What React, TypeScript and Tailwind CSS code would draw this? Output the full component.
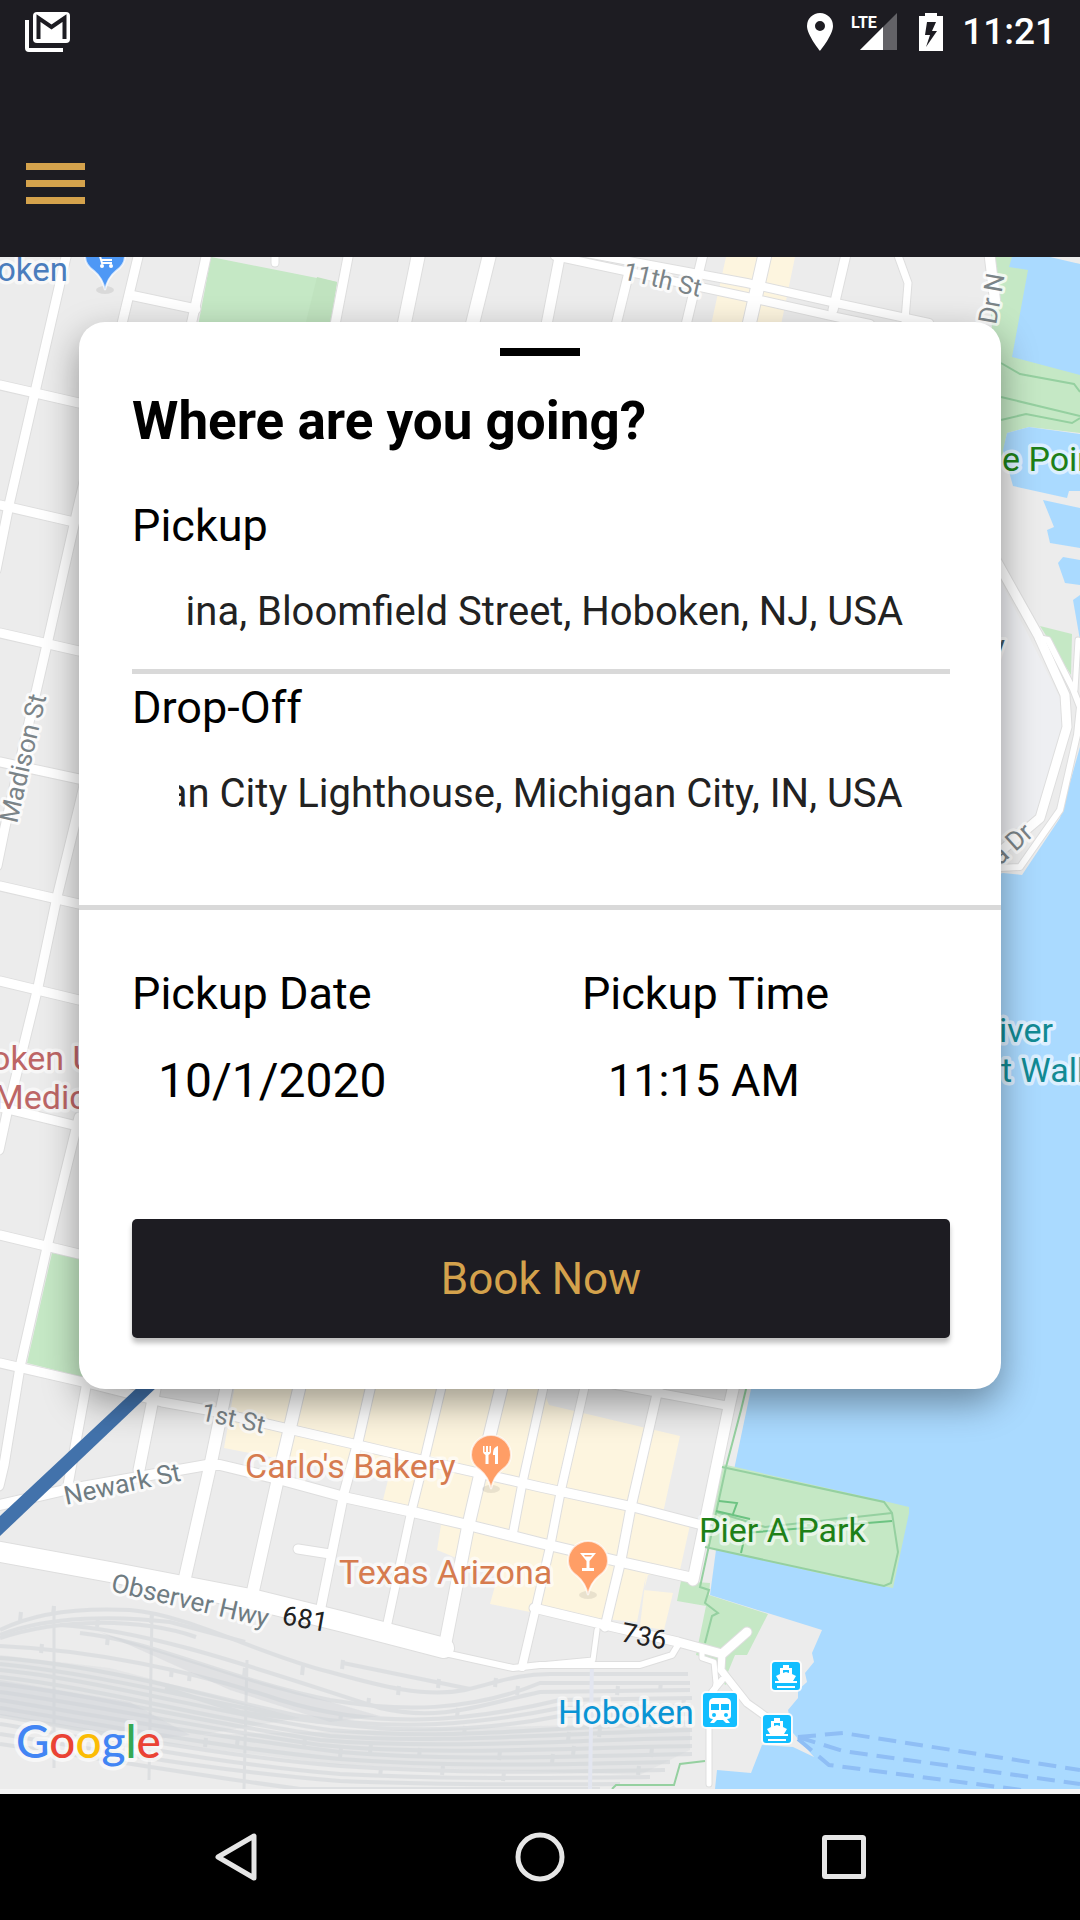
import { useEffect, useRef } from "react";

type Line = { d: string; w: number };

const roads: Line[] = [
  // north-south streets, west side
  { d: "M66 257L35 392L9 505L-4 570", w: 9 },
  { d: "M138 257L79 503L48 640L36 692L5 827L-3 866", w: 9 },
  { d: "M206 257L190 330L79 807L57 897L38 987L7 1113L-1 1150", w: 9 },
  { d: "M79 1117L48 1243L20 1367L4 1465L-1 1486", w: 9 },
  { d: "M86 1387L68 1485", w: 9 },
  { d: "M155 1389L139 1470", w: 11 },
  { d: "M227 1385L210 1467L184 1582", w: 12 },
  { d: "M300 1385L277 1483L251 1600", w: 12 },
  { d: "M371 1385L358 1442L344 1493L320 1612", w: 9 },
  { d: "M442 1385L425 1457L411 1513L386 1630", w: 8 },
  { d: "M502 1385L482 1467L468 1527L445 1645", w: 12 },
  { d: "M544 1385L523 1480L513 1533", w: 8 },
  { d: "M585 1385L561 1490L550 1547L537 1603L522 1667", w: 8 },
  { d: "M659 1385L631 1507L621 1560L605 1627", w: 9 },
  { d: "M734 1385L729 1407L693 1580", w: 11 },
  // cross streets, west side
  { d: "M130 295L196 309", w: 9 },
  { d: "M0 385L79 403", w: 9 },
  { d: "M0 505L74 522", w: 9 },
  { d: "M0 633L79 651", w: 9 },
  { d: "M0 762L79 779", w: 9 },
  { d: "M0 886L79 904", w: 9 },
  { d: "M0 981L79 1000", w: 9 },
  { d: "M0 1107L73 1125", w: 9 },
  { d: "M0 1235L79 1254", w: 9 },
  { d: "M0 1363L83 1382L162 1402L207 1410L293 1430L358 1445L430 1462L540 1487L633 1507L702 1525", w: 9 },
  { d: "M600 1382L729 1406", w: 8 },
  { d: "M0 1505L65 1490L207 1465L220 1465L282 1480L348 1498L413 1512L468 1525L540 1543L621 1562L693 1578", w: 10 },
  { d: "M-10 1550L110 1572L255 1600L344 1622L444 1648", w: 20 },
  { d: "M445 1653L513 1668L540 1665L640 1665L672 1655L678 1645", w: 6 },
  { d: "M534 1608L605 1625L678 1642L722 1654L747 1632", w: 9 },
  { d: "M597 1630L593 1660L540 1665", w: 5 },
  { d: "M298 1549L330 1554", w: 9 },
  // northern edge
  { d: "M348 257L334 330", w: 9 },
  { d: "M418 257L403 330", w: 13 },
  { d: "M489 257L471 330", w: 13 },
  { d: "M275 250L275 263", w: 7 },
  { d: "M561 250L547 322", w: 10 },
  { d: "M629 272L616 325", w: 9 },
  { d: "M704 250L686 325", w: 9 },
  { d: "M766 250L749 325", w: 13 },
  { d: "M847 250L833 310", w: 9 },
  { d: "M896 250L908 283L905 320", w: 7 },
  { d: "M989 250L995 300", w: 10 },
  { d: "M570 250L747 283L836 303L929 323", w: 8 },
  { d: "M555 256L747 297L836 317L870 324", w: 8 },
  // waterfront drive
  { d: "M995 558L1038 635L1065 695L1067 727L1040 818L995 856", w: 9 },
  { d: "M1038 638L1048 640L1073 689L1080 707L1077 735L1060 810L1020 867L1000 868", w: 6 },
  { d: "M1078 640L1075 690", w: 5 },
  { d: "M722 1653L721 1670L747 1703L768 1718", w: 7 },
  { d: "M702 1653L702 1658L714 1662L716 1683L709 1727L709 1784", w: 5 },
  { d: "M722 1680L712 1692", w: 6 },
];

const water = [
  "1012,257 1050,257 1080,264 1080,375 1012,357 1028,270 1009,267",
  "1007,433 1029,427 1080,434 1080,491 1069,491 1067,498 1013,486 1003,450",
  "1043,500 1080,508 1080,548 1050,543 1047,530 1054,527",
  "1063,557 1080,560 1080,585 1065,583 1058,563",
  "1073,600 1080,595 1080,640",
  "1080,747 1060,818 1022,875 1003,873 900,900 751,1389 735,1465 716,1550 710,1595 822,1630 812,1653 814,1662 805,1673 807,1682 798,1690 798,1698 788,1710 793,1733 814,1757 793,1747 762,1745 751,1773 717,1770 715,1789 1080,1789",
];

const parks = [
  "994,257 1012,257 1080,264 1080,433 1029,427 1007,433 1001,463 990,300",
  "211,257 337,282 330,326 198,326",
  "52,1253 85,1260 95,1380 27,1363",
  "1040,626 1072,634 1071,675",
  "681,1581 710,1583 709,1595 768,1614 747,1655 735,1655 728,1672 734,1680 725,1685 714,1660 696,1655 706,1606 677,1601",
];

const pierPaths = [
  "M1001 363L1020 374L1074 384L1080 392",
  "M1001 397L1080 416",
  "M1001 420L1026 414L1072 423L1080 418",
  "M722 1467L884 1502L892 1513L898 1552L891 1583L884 1586L705 1547",
  "M892 1513L765 1527L716 1512",
  "M747 1385L741 1410L726 1467L700 1587L709 1590L705 1603L718 1613L712 1616L705 1643",
  "M705 1761L680 1764L674 1785L616 1785L612 1789",
];

const railLines = [
  "M0 1630C40 1610 90 1608 130 1610C190 1615 260 1655 330 1672C380 1686 425 1698 465 1690C505 1680 520 1674 550 1674L688 1674",
  "M0 1635C50 1615 120 1616 170 1622L245 1642",
  "M0 1638C60 1618 140 1618 196 1637",
  "M80 1633C150 1640 230 1680 330 1700C400 1712 470 1712 540 1683L690 1683",
  "M60 1625C150 1630 260 1670 380 1708C440 1722 480 1705 540 1692L690 1690",
  "M343 1663L470 1689",
  "M0 1646C90 1650 190 1670 280 1700C370 1728 460 1724 560 1700L692 1698",
  "M0 1658C110 1666 220 1700 300 1716C400 1732 480 1724 560 1708L692 1706",
  "M0 1664C110 1675 220 1706 320 1722C420 1736 500 1728 560 1716L692 1714",
  "M0 1670C100 1680 220 1714 330 1730C440 1740 520 1730 692 1722",
  "M0 1677C100 1688 220 1722 330 1736C440 1744 540 1734 692 1730",
  "M0 1684C100 1696 200 1722 320 1740C440 1750 560 1740 692 1738",
  "M0 1692C100 1706 200 1728 320 1745C440 1756 560 1748 692 1746",
  "M0 1700C100 1716 220 1738 340 1752C460 1762 560 1756 692 1754",
  "M0 1708C100 1724 220 1748 340 1759C460 1768 560 1764 670 1762",
  "M0 1716C100 1732 220 1756 340 1766C460 1774 560 1772 665 1770",
  "M0 1724C100 1740 220 1764 340 1774C460 1780 560 1778 650 1777",
  "M0 1734C100 1750 220 1772 340 1781C460 1786 560 1784 620 1784",
  "M0 1744C100 1758 200 1776 300 1789L600 1789",
  "M165 1688L240 1712L320 1722",
];

const ticks = [
  [21, 1616], [54, 1610], [98, 1622], [108, 1640], [152, 1618], [42, 1648], [172, 1672], [190, 1676],
  [245, 1672], [303, 1670], [343, 1664], [399, 1690], [439, 1683], [341, 1718], [369, 1702], [458, 1712],
  [496, 1682], [518, 1690], [206, 1742], [238, 1740], [305, 1742], [341, 1752], [371, 1748], [420, 1752],
  [465, 1730], [500, 1755], [569, 1736], [574, 1750], [606, 1707], [618, 1690], [652, 1752], [661, 1686],
  [684, 1702], [639, 1770], [504, 1776], [443, 1770], [381, 1772], [553, 1758], [600, 1732], [640, 1722],
];

function Pin({ x, y, fill, children }: { x: number; y: number; fill: string; children?: React.ReactNode }) {
  return (
    <g transform={`translate(${x} ${y})`}>
      <ellipse cx="0" cy="1" rx="9" ry="4" fill="#000" opacity="0.08" />
      <path
        d="M0 1C-2 -8 -5 -13 -11 -18C-17 -22 -20 -27 -20 -33A20 20 0 0 1 20 -33C20 -27 17 -22 11 -18C5 -13 2 -8 0 1Z"
        fill={fill}
        stroke="#fff"
        strokeWidth="2"
        strokeOpacity="0.7"
      />
      {children}
    </g>
  );
}

function Ferry({ x, y }: { x: number; y: number }) {
  return (
    <g transform={`translate(${x} ${y})`}>
      <rect x="-1" y="-1" width="32" height="32" rx="5" fill="#fff" opacity="0.85" />
      <rect x="1" y="1" width="28" height="28" rx="3" fill="#12beff" />
      <path d="M12 4h6v3h3v6l4 2-3 5H8l-3-5 4-2V7h3zM12 9v3l3-1 3 1V9z" fill="#fff" fillRule="evenodd" />
      <path d="M4 20h22v2H4zM6 25h18v2H6z" fill="#fff" />
    </g>
  );
}

function CityMap() {
  return (
    <svg
      className="absolute inset-0 h-full w-full"
      viewBox="0 257 1080 1532"
      preserveAspectRatio="xMidYMin slice"
      fontFamily="Roboto, sans-serif"
      role="img"
      aria-label="Map of Hoboken"
    >
      <rect x="0" y="257" width="1080" height="1540" fill="#ececec" />
      <polygon points="995,570 1060,698 1063,727 1037,816 995,840" fill="#eeeff2" />
      <g fill="#c5e8c5">
        {parks.map((p) => (
          <polygon key={p} points={p} />
        ))}
      </g>
      <polygon points="317,277 337,282 330,326 305,326" fill="#c0e3bf" />
      <g fill="#fdf5df">
        <polygon points="726,257 795,257 781,325 711,325" />
        <polygon points="235,1385 541,1385 549,1405 680,1436 663,1513 690,1525 680,1570 648,1575 644,1590 673,1593 664,1630 640,1626 646,1575 637,1622 530,1612 490,1604 498,1575 437,1550 441,1525 383,1500 388,1480 224,1448" />
      </g>
      <g fill="#aadaff">
        {water.map((p) => (
          <polygon key={p} points={p} />
        ))}
      </g>
      <polygon points="722,1464 884,1501 909,1507 909,1513 893,1588 840,1578 705,1547" fill="#c5e8c5" />

      <path d="M0 1655L110 1668L300 1718L200 1735L690 1722L690 1750L640 1775L340 1765L100 1735L0 1715Z" fill="#d8dbde" opacity="0.35" />
      <path d="M0 1680L130 1702L190 1735L150 1740L0 1715Z" fill="#d8dbde" opacity="0.7" />
      <path d="M100 1632L240 1676L380 1716L330 1722L230 1690Z" fill="#d8dbde" opacity="0.6" />
      <g fill="none" stroke="#d0d4d8" strokeWidth="4" opacity="0.5">
        {railLines.map((d) => (
          <path key={d} d={d} />
        ))}
        {ticks.map(([x, y]) => (
          <path key={`${x}-${y}`} d={`M${x} ${y - 4}l-1 9`} />
        ))}
        <path d="M54 1606V1768M152 1612L149 1780M247 1660L244 1789" strokeWidth="3" />
      </g>
      <path d="M592 1660L590 1789" stroke="#e3e6f0" strokeWidth="4" />

      <g fill="none" stroke="#dedede" strokeLinejoin="round" strokeLinecap="round">
        {roads.map((r) => (
          <path key={r.d} d={r.d} strokeWidth={r.w + 2} />
        ))}
      </g>
      <g fill="none" stroke="#fff" strokeLinejoin="round" strokeLinecap="round">
        {roads.map((r) => (
          <path key={r.d} d={r.d} strokeWidth={r.w} />
        ))}
      </g>
      <polygon points="140,1385 159,1385 0,1536 0,1516" fill="#4272ab" />

      <g fill="none" stroke="#95d0a0" strokeWidth="2">
        {pierPaths.map((d) => (
          <path key={d} d={d} />
        ))}
        <path d="M892 1521L745 1533M719 1501L737 1503L733 1514M716 1511L750 1519M744 1540L741 1553" stroke="#6cc382" strokeWidth="2" />
      </g>
      <g fill="none" stroke="#8fbef5" strokeWidth="4" strokeDasharray="18 9">
        <path d="M798 1737L843 1733L1080 1770" />
        <path d="M798 1737L843 1751L1080 1784" />
        <path d="M798 1739L829 1765L1022 1790" />
      </g>

      {/* street names */}
      <g fontSize="26" fill="#7b8488" stroke="#fff" strokeOpacity="0.75" strokeWidth="6" strokeLinejoin="round" paintOrder="stroke">
        <text transform="translate(622 279) rotate(13)" fontSize="25">11th St</text>
        <text transform="translate(200 1420) rotate(12)" fontSize="25">1st St</text>
        <text transform="translate(66 1505) rotate(-12)" fill="#6f7c82">Newark St</text>
        <text transform="translate(110 1591) rotate(13)" fill="#6f7c82">Observer Hwy</text>
        <text transform="translate(17 824) rotate(-77)">Madison St</text>
        <text transform="translate(996 325) rotate(-80)">Dr N</text>
        <text transform="translate(1000 866) rotate(-42)">a Dr</text>
        <text x="1005" y="656" textAnchor="end" fill="#455a64" fontSize="30">y</text>
      </g>
      <g fontSize="27" fill="#222">
        <text transform="translate(281 1624) rotate(10)">681</text>
        <text transform="translate(620 1641) rotate(11)">736</text>
      </g>

      {/* places */}
      <g fontSize="34" stroke="#fff" strokeOpacity="0.6" strokeWidth="7" strokeLinejoin="round" paintOrder="stroke">
        <text x="68" y="281" textAnchor="end" fill="#4a7dbd" fontSize="33">oken</text>
        <text x="245" y="1478" fill="#d67b4f">Carlo's Bakery</text>
        <text x="339" y="1584" fill="#d67b4f">Texas Arizona</text>
        <text x="699" y="1542" fill="#1e8018">Pier A Park</text>
        <text x="558" y="1724" fill="#0a94d4">Hoboken</text>
        <text x="1002" y="471" fill="#1e8018">e Point</text>
        <text x="1053" y="1042" textAnchor="end" fill="#128a94">River</text>
        <text x="1001" y="1082" fill="#128a94">t Walk</text>
        <text x="-9" y="1070" fill="#bd6666">oken U</text>
        <text x="-6" y="1109" fill="#bd6666">Medical</text>
      </g>

      <Pin x={105} y={289} fill="#4e98f5">
        <path d="M-9 -36h3l3 10H7M-5 -33H8M-4 -29H7" stroke="#fff" strokeWidth="2" fill="none" />
        <circle cx="-3" cy="-23" r="2" fill="#fff" />
        <circle cx="6" cy="-23" r="2" fill="#fff" />
      </Pin>
      <Pin x={491} y={1488} fill="#ff9e66">
        <path d="M-8 -42v6a4 4 0 0 0 2.500 3v9h3v-9A4 4 0 0 0 0 -36v-6h-1.500v6h-1.500v-6h-2v6h-1.500v-6zM7 -42c-4 1-5 4-5 9h2v9h3z" fill="#fff" />
      </Pin>
      <Pin x={588} y={1594} fill="#ff9e66">
        <path d="M-8 -41H8L1.500 -33V-26H6V-23H-6V-26H-1.500V-33ZM-4 -39L-3 -37.500H3L4 -39Z" fill="#fff" fillRule="evenodd" />
      </Pin>

      <g transform="translate(703 1693)">
        <rect x="-2" y="-2" width="38" height="38" rx="5" fill="#fff" opacity="0.85" />
        <rect width="34" height="34" rx="3" fill="#12beff" />
        <path d="M10 5h14q4 1 4 5v13q0 3-4 3l3 4h-4l-3-3h-6l-3 3H7l3-4q-4 0-4-3V10q0-4 4-5z" fill="#fff" />
        <path d="M8 11h8v6H8zM18 11h8v6h-8z" fill="#12beff" />
        <circle cx="11" cy="22" r="2" fill="#12beff" />
        <circle cx="23" cy="22" r="2" fill="#12beff" />
      </g>
      <Ferry x={771} y={1661} />
      <Ferry x={762} y={1714} />

      <text
        x="16"
        y="1758"
        fontFamily="Lato, sans-serif"
        fontSize="46"
        fontWeight="500"
        stroke="#fff"
        strokeOpacity="0.6"
        strokeWidth="8"
        strokeLinejoin="round"
        paintOrder="stroke"
      >
        <tspan fill="#4285f4">G</tspan>
        <tspan fill="#ea4335">o</tspan>
        <tspan fill="#fbbc05">o</tspan>
        <tspan fill="#4285f4">g</tspan>
        <tspan fill="#34a853">l</tspan>
        <tspan fill="#ea4335">e</tspan>
      </text>
    </svg>
  );
}

function StatusBar() {
  return (
    <div className="flex h-[63px] items-center justify-between pr-6 pl-[25px] text-white">
      <svg width="46" height="40" viewBox="0 0 46 40" aria-label="Gmail notification">
        <path d="M0 8h4v28h34v4H4q-4 0-4-4z" fill="#fff" />
        <rect x="8" y="0" width="37" height="31" rx="4" fill="#fff" />
        <path d="M13.500 27V6L26.500 15L39.500 6V27" fill="none" stroke="#1d1c22" strokeWidth="4" />
      </svg>
      <div className="flex items-center">
        <svg width="26" height="38" viewBox="0 0 26 38" aria-label="Location">
          <path d="M13 0a13 13 0 0 1 13 13c0 9-13 25-13 25S0 22 0 13A13 13 0 0 1 13 0zm0 8a5 5 0 1 0 0 10 5 5 0 0 0 0-10z" fill="#fff" fillRule="evenodd" />
        </svg>
        <svg className="ml-[18px] overflow-visible" width="46" height="38" viewBox="0 0 46 38" aria-label="LTE signal">
          <path d="M46 0V37H9Z" fill="#636267" />
          <path d="M32 14V37H9Z" fill="#fff" />
          <text x="0" y="15" fill="#fff" fontFamily="Roboto, sans-serif" fontWeight="700" fontSize="16">LTE</text>
        </svg>
        <svg className="ml-[22px]" width="24" height="38" viewBox="0 0 24 38" aria-label="Battery charging">
          <path d="M6 0h12v3h6v35H0V3h6zM8 9L6 22h5L7 34L18 18h-5l4-9z" fill="#fff" fillRule="evenodd" />
        </svg>
        <span className="ml-[19px] text-[37px] leading-[44px] font-medium">11:21</span>
      </div>
    </div>
  );
}

function AddressField({ id, label, value }: { id: string; label: string; value: string }) {
  const ref = useRef<HTMLInputElement>(null);
  useEffect(() => {
    const el = ref.current;
    if (el) el.scrollLeft = el.scrollWidth;
  }, []);
  return (
    <div>
      <label htmlFor={id} className="block text-[45px] leading-[54px]">
        {label}
      </label>
      <div className="mt-[35px] px-[47px]">
        <input
          ref={ref}
          id={id}
          type="text"
          defaultValue={value}
          className="block h-12 w-full bg-transparent text-right text-[40px] leading-[48px] text-[#222] outline-none"
        />
      </div>
    </div>
  );
}

function ValueField({ id, label, value, big }: { id: string; label: string; value: string; big?: boolean }) {
  return (
    <div>
      <label htmlFor={id} className="block text-[45px] leading-[54px]">
        {label}
      </label>
      <input
        id={id}
        type="text"
        defaultValue={value}
        className={`mt-[33px] block h-[54px] w-full bg-transparent pl-[26px] leading-[54px] outline-none ${
          big ? "text-[48px]" : "text-[45px]"
        }`}
      />
    </div>
  );
}

export default function App() {
  return (
    <div className="flex min-h-screen flex-col bg-[#f5f5f5] font-[Roboto,sans-serif] text-black">
      <header className="bg-[#1d1c22] pb-[53px]">
        <StatusBar />
        <button type="button" aria-label="Open menu" className="mt-[100px] ml-[26px] flex w-[59px] flex-col gap-[10px]">
          <span className="block h-[7px] w-full bg-[#d4a24c]" />
          <span className="block h-[7px] w-full bg-[#d4a24c]" />
          <span className="block h-[7px] w-full bg-[#d4a24c]" />
        </button>
      </header>

      <main className="relative mb-[5px] flex-1 overflow-hidden">
        <CityMap />
        <form
          className="relative mx-[79px] mt-[65px] mb-16 rounded-[26px] bg-white pt-[26px] pb-[51px] shadow-[0_14px_36px_rgba(0,0,0,0.38)]"
          onSubmit={(e) => e.preventDefault()}
        >
          <div className="mx-auto h-2 w-20 bg-black" />
          <div className="pr-[51px] pl-[53px]">
            <h1 className="mt-[35px] mb-12 text-[53px] leading-[60px] font-bold">Where are you going?</h1>
            <AddressField id="pickup" label="Pickup" value="ina, Bloomfield Street, Hoboken, NJ, USA" />
            <hr className="mt-[33px] mb-[7px] h-[5px] border-0 bg-[#d9d9d9]" />
            <AddressField id="dropoff" label="Drop-Off" value="Michigan City Lighthouse, Michigan City, IN, USA" />
          </div>
          <hr className="mt-[87px] h-[5px] border-0 bg-[#d9d9d9]" />
          <div className="pr-[51px] pl-[53px]">
            <div className="mt-[57px] grid grid-cols-[11fr_9fr]">
              <ValueField id="date" label="Pickup Date" value="10/1/2020" big />
              <ValueField id="time" label="Pickup Time" value="11:15 AM" />
            </div>
            <button
              type="submit"
              className="mt-[111px] block h-[119px] w-full rounded-[5px] bg-[#1d1c22] text-[44px] leading-[54px] text-[#d4a24c] shadow-[0_5px_5px_rgba(0,0,0,0.25)]"
            >
              Book Now
            </button>
          </div>
        </form>
      </main>

      <nav className="grid h-[126px] grid-cols-[1fr_124px_1fr] items-center bg-black">
        <button type="button" aria-label="Back" className="mr-[220px] justify-self-end">
          <svg width="44" height="50" viewBox="0 0 44 50">
            <path d="M40 4V46L4 25Z" fill="none" stroke="#e6e6e6" strokeWidth="5" strokeLinejoin="round" />
          </svg>
        </button>
        <button type="button" aria-label="Home" className="justify-self-center">
          <svg width="50" height="50" viewBox="0 0 50 50">
            <circle cx="25" cy="25" r="22" fill="none" stroke="#e6e6e6" strokeWidth="5" />
          </svg>
        </button>
        <button type="button" aria-label="Recent apps" className="ml-[220px]">
          <svg width="44" height="44" viewBox="0 0 44 44">
            <rect x="2.500" y="2.500" width="39" height="39" rx="1" fill="none" stroke="#e6e6e6" strokeWidth="5" strokeLinejoin="round" />
          </svg>
        </button>
      </nav>
    </div>
  );
}
